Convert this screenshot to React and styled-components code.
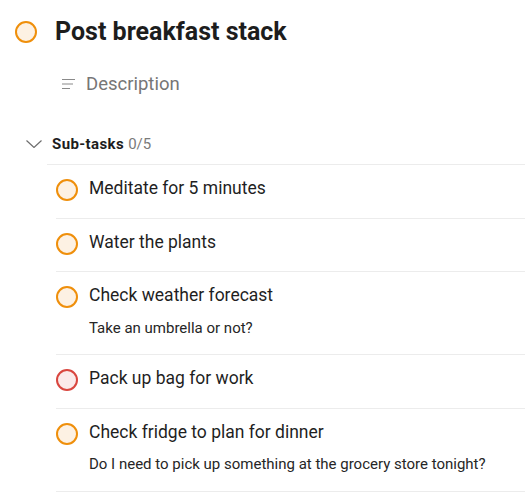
import React from 'react';
import styled, { createGlobalStyle } from 'styled-components';

const GlobalStyle = createGlobalStyle`
  body {
    margin: 0;
    background: #ffffff;
    font-family: Roboto, "Liberation Sans", sans-serif;
    color: #202020;
  }
`;

const tones = {
  orange: { border: '#ef8f0b', fill: '#fdf1e3' },
  red: { border: '#d9463f', fill: '#fbeaea' },
};

const PageView = styled.div`
  width: 525px;
  height: 500px;
  overflow: hidden;
`;

const HeaderView = styled.div`
  display: flex;
  align-items: center;
  gap: 18px;
  padding: 20px 0 0 15px;
`;

const Check = styled.span`
  flex: none;
  box-sizing: border-box;
  width: 22px;
  height: 22px;
  border-radius: 50%;
  border: 2px solid ${p => tones[p.tone].border};
  background: ${p => tones[p.tone].fill};
  margin-top: ${p => p.offset || 0}px;
`;

const TitleView = styled.h1`
  margin: 0;
  font-size: 25px;
  line-height: 24px;
  font-weight: 700;
  color: #1d1d1d;
`;

const DescriptionView = styled.div`
  display: flex;
  align-items: center;
  gap: 11px;
  margin: 28px 0 0 62px;
  font-size: 18.5px;
  line-height: 24px;
  color: #767676;
`;

const SectionHead = styled.div`
  display: flex;
  align-items: center;
  gap: 10px;
  margin-top: 38px;
  padding: 0 0 10px 26px;
  font-size: 15px;
  line-height: 20px;
`;

const SectionLabel = styled.span`
  font-weight: 700;
  letter-spacing: 0.4px;
  color: #1d1d1d;
`;

const Count = styled.span`
  color: #7a7a7a;
  margin-left: 4px;
`;

const ListView = styled.ul`
  list-style: none;
  margin: 0 0 0 47px;
  padding: 0 0 0 9px;
  border-top: 1px solid #ececec;
`;

const ItemView = styled.li`
  display: flex;
  align-items: flex-start;
  gap: 11px;
  padding: 11px 0 16.5px;
  border-bottom: 1px solid #ececec;
`;

const ItemBody = styled.div`
  display: flex;
  flex-direction: column;
  gap: 10.5px;
`;

const ItemTitle = styled.span`
  font-size: 17.5px;
  line-height: 24px;
  color: #1f1f1f;
`;

const ItemNote = styled.span`
  font-size: 15px;
  line-height: 20px;
  color: #262626;
`;

const LinesIcon = () => (
  <svg width="13" height="12" viewBox="0 0 13 12" fill="none" stroke="#8a8a8a" strokeWidth="1.2">
    <path d="M0 1.5h13M0 6h11M0 10.5h8" />
  </svg>
);

const Chevron = () => (
  <svg width="16" height="8" viewBox="0 0 16 8" fill="none" stroke="#6e6e6e" strokeWidth="1.2">
    <path d="M0.5 0.5l7.5 7 7.5-7" />
  </svg>
);

const subtasks = [
  { title: 'Meditate for 5 minutes', tone: 'orange' },
  { title: 'Water the plants', tone: 'orange' },
  { title: 'Check weather forecast', note: 'Take an umbrella or not?', tone: 'orange' },
  { title: 'Pack up bag for work', tone: 'red' },
  {
    title: 'Check fridge to plan for dinner',
    note: 'Do I need to pick up something at the grocery store tonight?',
    tone: 'orange',
  },
];

const App = () => (
  <PageView>
    <GlobalStyle />
    <HeaderView>
      <Check tone="orange" />
      <TitleView>Post breakfast stack</TitleView>
    </HeaderView>
    <DescriptionView>
      <LinesIcon />
      Description
    </DescriptionView>
    <SectionHead>
      <Chevron />
      <span>
        <SectionLabel>Sub-tasks</SectionLabel>
        <Count>0/5</Count>
      </span>
    </SectionHead>
    <ListView>
      {subtasks.map(task => (
        <ItemView key={task.title}>
          <Check tone={task.tone} offset={3} />
          <ItemBody>
            <ItemTitle>{task.title}</ItemTitle>
            {task.note && <ItemNote>{task.note}</ItemNote>}
          </ItemBody>
        </ItemView>
      ))}
    </ListView>
  </PageView>
);

export default App;
